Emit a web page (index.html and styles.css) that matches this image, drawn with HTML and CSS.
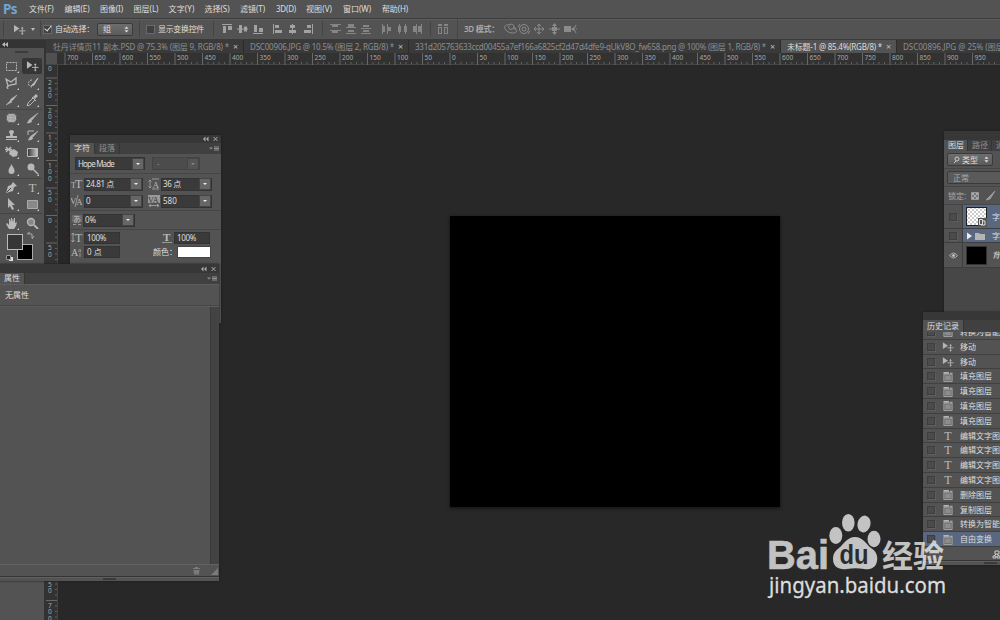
FILE: index.html
```html
<!DOCTYPE html>
<html lang="zh-CN">
<head>
    <meta charset="UTF-8">
    <title>Photoshop</title>
    <link rel="stylesheet" href="styles.css">
</head>
<body>
    <svg class="defs">
        <symbol id="move" viewBox="0 0 14 12"><path d="M1 1v8l6-4z" fill="currentColor"/><path d="M10 4v7M6.500 7.500h7" stroke="currentColor" fill="none"/><path d="M8.500 5l1.500-2 1.500 2zM8.500 10l1.500 2 1.500-2z" fill="currentColor"/></symbol>
        <symbol id="layer" viewBox="0 0 12 12"><path d="M1.500 3.500h9v8h-9z" stroke="#a5a5a5" fill="#6c6c6c"/><path d="M1 1h6v2H1zM8 2h3v1H8z" fill="#b5b5b5"/><path d="M3 5h6v5H3z" fill="#8d8d8d"/></symbol>
        <symbol id="updown" viewBox="0 0 6 8"><path d="M0.500 3L3 .500 5.500 3zM.500 5L3 7.500 5.500 5z" fill="#ddd"/></symbol>
        <symbol id="menu" viewBox="0 0 10 6"><path d="M0 1.500h4l-2 2zM5 .500h5v1H5zM5 2h5v1H5zM5 3.500h5v1H5z" fill="#909090"/></symbol>
    </svg>

    <nav class="menubar">
        <span class="logo">Ps</span>
        <span><b data-w="24.5">文件(F)</b></span>
        <span><b data-w="25">编辑(E)</b></span>
        <span><b data-w="23">图像(I)</b></span>
        <span><b data-w="25">图层(L)</b></span>
        <span><b data-w="26">文字(Y)</b></span>
        <span><b data-w="25">选择(S)</b></span>
        <span><b data-w="25">滤镜(T)</b></span>
        <span><b data-w="20">3D(D)</b></span>
        <span><b data-w="26">视图(V)</b></span>
        <span><b data-w="28">窗口(W)</b></span>
        <span><b data-w="26">帮助(H)</b></span>
    </nav>

    <div class="options">
        <div class="opt-tool"><svg width="13" height="11"><use href="#move"/></svg><i class="caret"></i></div>
        <div class="opt-auto"><i class="check on"></i><b data-w="39">自动选择：</b><div class="select">组<svg width="5" height="7"><use href="#updown"/></svg></div></div>
        <div class="opt-show"><i class="check"></i><b data-w="46">显示变换控件</b></div>
        <svg class="opt-align" width="237" height="20" fill="#a2a2a2" stroke="none">
            <path d="M9 5h10v1H9zM10 7h3v7h-3zM15 7h4v4h-4z"/>
            <path d="M24 9.500h11v1H24zM26 6h3v8h-3zM31 7.500h3v5h-3z"/>
            <path d="M40 14h10v1H40zM41 6h3v7h-3zM46 9h4v4h-4z"/>
            <path d="M60 5h1v10h-1zM62 6h4v3h-4zM62 11h7v3h-7z"/>
            <path d="M79 5h1v10h-1zM77 6h5v3h-5zM76 11h7v3h-7z"/>
            <path d="M99 5h1v10h-1zM94 6h4v3h-4zM91 11h7v3h-7z"/>
            <path d="M109 2h1v15h-1z" fill="#444"/>
            <g fill="#858585">
                <path d="M117 5h11v1h-11zM119 6h6v2h-6zM117 11h11v1h-11zM119 12h6v2h-6z"/>
                <path d="M133 8h10v1h-10zM135 5h6v3h-6zM133 14h10v1h-10zM135 11h6v2h-6z"/>
                <path d="M148 9h10v1h-10zM150 6h6v2h-6zM148 14h10v1h-10zM150 11h6v2h-6z"/>
                <path d="M169 5h1v10h-1zM170 7h2v6h-2zM174 5h1v10h-1zM175 8h3v4h-3z"/>
                <path d="M186 5h1v10h-1zM185 7h3v6h-3zM192 5h1v10h-1zM191 7h3v6h-3z"/>
                <path d="M200 7h3v6h-3zM203 5h1v10h-1zM205 7h3v6h-3zM208 5h1v10h-1z"/>
            </g>
            <path d="M217 2h1v15h-1z" fill="#444"/>
            <path d="M225 5h4v2h-4zM231 5h4v2h-4zM225 8h4v7h-4zM231 8h4v7h-4z" fill="#858585"/>
            <path d="M226 9h2v5h-2zM232 9h2v5h-2z" fill="#555"/>
        </svg>
        <div class="opt-3d"><b data-w="35">3D 模式：</b>
            <svg width="78" height="16" fill="none" stroke="#8b8b8b">
                <path d="M3 9C0 7 2 3 6 4c3-2 6 0 5 3M3 9c2 3 8 4 10 2s-1-4-4-3-4-1-3-3M10 6l3 2"/>
                <circle cx="21" cy="8" r="4.500"/><circle cx="21" cy="8" r="2"/><path d="M17 3l-2 3M25 13l2-3"/>
                <path d="M31 8h10M36 3v10M33 6l-2 2 2 2M39 6l2 2-2 2M34 5l2-2 2 2M34 11l2 2 2-2"/>
                <path d="M46 8h11M51.500 3v10"/><path d="M49 5l2.500-3L54 5zM49 11l2.500 3 2.500-3zM49 6h5v4h-5z" fill="#8b8b8b" stroke="none"/>
                <path d="M61 5h7v6h-7zM68 8l3-2v4z" fill="#8b8b8b" stroke="none"/><path d="M73 4l-2 4 2 4M73 8h1"/>
            </svg>
        </div>
    </div>

    <main class="workspace">
        <aside class="tools">
            <div class="tools-head"><svg width="6" height="5"><path d="M3 0v5L0 2.500zM6 0v5L3 2.500z" fill="#bbb"/></svg></div>
            <div class="grip"></div>
            <div class="tool-grid" id="tools"></div>
            <svg class="swatches" width="44" height="34">
                <path d="M28 4h4v4M27 4l3-2M32 9l2-3" stroke="#aaa" fill="none"/>
                <rect x="17.500" y="14.500" width="15" height="15" fill="#000" stroke="#aaa"/>
                <rect x="7.500" y="4.500" width="15" height="15" fill="#363636" stroke="#bbb"/>
                <path d="M9 27h4v4H9z" fill="#ddd"/><path d="M6.500 25.500h4v4h-4z" fill="#222" stroke="#999"/>
            </svg>
        </aside>
        <section class="documents">
            <div class="tabs">
                <div class="tab"><b data-w="176">牡丹详情页11 副本.PSD @ 75.3% (图层 9, RGB/8) *</b><i>×</i></div>
                <div class="tab"><b data-w="144">DSC00906.JPG @ 10.5% (图层 2, RGB/8) *</b><i>×</i></div>
                <div class="tab"><b data-w="351">331d205763633ccd00455a7ef166a6825cf2d47d4dfe9-qUkV8O_fw658.png @ 100% (图层 1, RGB/8) *</b><i>×</i></div>
                <div class="tab active"><b data-w="95">未标题-1 @ 85.4%(RGB/8) *</b><i>×</i></div>
                <div class="tab"><b data-w="144">DSC00896.JPG @ 25% (图层 2, RGB/8) *</b><i>×</i></div>
            </div>
            <div class="ruler-row"><div class="corner"></div><svg id="hruler" width="943" height="12"></svg></div>
            <div class="view-row">
                <svg id="vruler" width="12" height="555"></svg>
                <div class="view"><div class="artboard"></div></div>
            </div>
        </section>
    </main>

    <section class="panel character">
        <div class="bar"><svg width="15" height="6"><path d="M2.500 .500v5L0 3zM5.500 .500v5L3 3z" fill="#aaa"/><path d="M10.500 1l4 4M14.500 1l-4 4" stroke="#aaa"/></svg></div>
        <div class="ptabs"><span class="on">字符</span><span>段落</span><svg width="10" height="6"><use href="#menu"/></svg></div>
        <div class="char-body">
            <div class="row fonts"><div class="combo c57"><b data-w="36">Hope Made</b><i></i></div><div class="combo c35 off">-<i></i></div></div>
            <div class="row two">
                <svg width="12" height="12"><text x="0" y="10" font-size="8">T</text><text x="4" y="10" font-size="12">T</text></svg>
                <div class="combo c46"><b data-w="28">24.81 点</b><i></i></div>
                <svg width="12" height="12"><path d="M2 2v8M.500 3.500L2 2l1.500 1.500M.500 8.500L2 10l1.500-1.500M4 1h7M4 11h7"/><text x="4.500" y="9.500" font-size="9">A</text></svg>
                <div class="combo c38"><b data-w="18">36 点</b><i></i></div>
            </div>
            <div class="row two">
                <svg width="12" height="12"><text x="-1" y="9" font-size="9">V</text><text x="5" y="10" font-size="9">A</text><path d="M7 0L4 12"/></svg>
                <div class="combo c46">0<i></i></div>
                <svg width="12" height="12"><path d="M0 0h12v8H0z" class="solid"/><text x="0" y="7.500" font-size="8" class="inv">VA</text><path d="M1 10.500h10M3 9l-2 1.500L3 12M9 9l2 1.500L9 12"/></svg>
                <div class="combo c38">580<i></i></div>
            </div>
            <div class="row scale">
                <svg width="10" height="12"><path d="M0 1h10v7H0z" class="solid dim"/><text x="1" y="8" font-size="8">あ</text><path d="M1 10.500h3M6 10.500h3"/></svg>
                <div class="combo c39">0%<i></i></div>
            </div>
            <div class="row pct">
                <svg width="13" height="12"><path d="M2 1v9M.500 3L2 1l1.500 2M.500 8L2 10l1.500-2"/><text x="4" y="10" font-size="12">T</text></svg>
                <div class="field"><b data-w="19">100%</b></div>
                <svg width="12" height="12"><text x="2" y="8.500" font-size="11" font-weight="bold">T</text><path d="M1 10.500h10"/></svg>
                <div class="field"><b data-w="19">100%</b></div>
            </div>
            <div class="row base">
                <svg width="13" height="12"><text x="0" y="10" font-size="10">A</text><text x="7" y="6" font-size="7">a</text><path d="M9 7v4"/></svg>
                <div class="field">0 点</div>
                <label>颜色：</label>
                <div class="color"></div>
            </div>
        </div>
    </section>

    <section class="panel properties">
        <div class="bar"><svg width="15" height="6"><path d="M2.500 .500v5L0 3zM5.500 .500v5L3 3z" fill="#aaa"/><path d="M10.500 1l4 4M14.500 1l-4 4" stroke="#aaa"/></svg></div>
        <div class="ptabs"><span class="on">属性</span><svg width="10" height="6"><use href="#menu"/></svg></div>
        <div class="prop-title">无属性</div>
        <div class="prop-body"><div class="scroll"></div></div>
        <div class="prop-foot">
            <svg width="26" height="11" fill="#7b7b7b"><path d="M1 3h7v1H1zM3 2h3v1H3zM1.500 5h6L7 9.500H2zM26 3v7h-7z"/></svg>
        </div>
        <div class="resize"></div>
    </section>

    <section class="panel layers">
        <div class="bar"></div>
        <div class="ptabs"><span class="on">图层</span><span>路径</span><span>通道</span></div>
        <div class="lrow filter"><div class="select"><svg width="7" height="8" fill="none" stroke="#ccc"><circle cx="4" cy="3" r="2"/><path d="M3 5L1 7"/></svg>类型<svg class="ud" width="5" height="7"><use href="#updown"/></svg></div></div>
        <div class="lrow blend"><div class="select">正常</div></div>
        <div class="lrow lock">锁定:<svg width="26" height="11"><path d="M1.500 2.500h7v7h-7z" fill="#777" stroke="#999"/><path d="M2 3h2v2H2zM6 3h2v2H6zM4 5h2v2H4zM2 7h2v2H2zM6 7h2v2H6z" fill="#aaa"/><path d="M25 1l-6 6-3 3 4-1z" fill="#999" stroke="#999"/></svg></div>
        <div class="layer sel l1"><div class="eye"><i class="box"></i></div><div class="name"><svg width="21" height="20"><defs><pattern id="chk" width="4" height="4" patternUnits="userSpaceOnUse"><path d="M0 0h4v4H0z" fill="#fff"/><path d="M0 0h2v2H0zM2 2h2v2H2z" fill="#ccc"/></pattern></defs><rect x=".5" y=".5" width="20" height="18" fill="url(#chk)" stroke="#222"/><path d="M12 11h9v9h-9z" fill="#555"/><path d="M13.500 12.500h3v5h-3zM17 14h2v4h-4" fill="none" stroke="#ddd"/></svg>字</div></div>
        <div class="layer sel l2"><div class="eye"><i class="box"></i></div><div class="name"><svg width="21" height="12"><path d="M1 2.500l5 3.500-5 3.500z" fill="#eee"/><path d="M9 3h4l1 1h5v6H9z" fill="#b4b4b4"/></svg>字</div></div>
        <div class="layer l3"><div class="eye"><svg width="9" height="7"><path d="M.500 3.500q4-5 8 0-4 5-8 0z" fill="#666" stroke="#aaa"/><circle cx="4.500" cy="3.500" r="1.300" fill="#ccc"/></svg></div><div class="name"><span class="thumb"></span><em>背景</em></div></div>
    </section>

    <section class="panel history">
        <div class="bar"></div>
        <div class="ptabs"><span class="on">历史记录</span></div>
        <div class="hlist" id="history"></div>
        <div class="hfoot"><svg width="8" height="9" fill="none" stroke="#ccc"><path d="M1 6h3v2H1zM5 6h3v2H5zM3 1h4v3H3zM4 4L2 6M5 4l2 2"/></svg></div>
        <div class="resize"></div>
    </section>

    <svg class="watermark" width="190" height="100" viewBox="762 505 190 100">
        <g fill="#fff" fill-opacity=".72">
            <text x="767" y="568.500" textLength="62" lengthAdjust="spacingAndGlyphs" class="wm-bai">Bai</text>
            <ellipse cx="835.800" cy="535.500" rx="6.500" ry="8.500"/>
            <ellipse cx="848.300" cy="522.800" rx="6.300" ry="8.800"/>
            <ellipse cx="864" cy="524" rx="6.500" ry="8.500" transform="rotate(12 864 524)"/>
            <ellipse cx="874" cy="539" rx="6.500" ry="8.300"/>
            <path d="M855 537c8 0 11 7 16 11 5 3 7 8 6 13-1 7-7 9-13 8-6-1-11-1-17 0-8 1-14-2-14-10 0-5 2-8 6-11 5-4 8-11 16-11z"/>
            <text x="882" y="567" textLength="62" class="wm-jy">经验</text>
            <text x="769" y="593" textLength="177" lengthAdjust="spacingAndGlyphs" class="wm-url">jingyan.baidu.com</text>
        </g>
        <text x="839.500" y="564" textLength="29" lengthAdjust="spacingAndGlyphs" class="wm-du">du</text>
    </svg>

    <script src="app.js"></script>
</body>
</html>
```

FILE: styles.css
```css
* {
    box-sizing: border-box;
}
body {
    margin: 0;
    width: 1000px;
    height: 620px;
    overflow: hidden;
    position: relative;
    display: flex;
    flex-direction: column;
    background: #282828;
    color: #dedede;
    font: 8px/10px "Noto Sans", "Noto Sans CJK SC", sans-serif;
    white-space: nowrap;
}
b, i {
    font-weight: normal;
    font-style: normal;
}
svg {
    display: block;
    flex: none;
}
.defs {
    position: absolute;
    width: 0;
    height: 0;
}

/* menu and options bars */
.menubar {
    height: 18px;
    flex: none;
    display: grid;
    grid-template-columns: 26px 35.5px 35.5px 33.5px 35px 36px 35.5px 36px 30px 37px 39px 60px;
    align-items: center;
    padding-left: 3px;
    background: #535353;
}
.logo {
    color: #6fa5da;
    font: bold 13.5px/16px "Noto Sans", sans-serif;
    letter-spacing: -0.6px;
}
.options {
    height: 22px;
    flex: none;
    display: flex;
    align-items: center;
    background: #535353;
    border-top: 1px solid #3d3d3d;
    border-bottom: 1px solid #3a3a3a;
    box-shadow: inset 0 1px #5e5e5e;
}
.opt-tool {
    width: 38px;
    margin-left: 3px;
    padding-left: 9px;
    display: flex;
    align-items: center;
    gap: 5px;
    height: 16px;
    border-left: 1px solid #444;
    border-right: 1px solid #444;
    color: #b5b5b5;
}
.caret {
    border: 2px solid transparent;
    border-top: 3px solid #bbb;
    border-bottom: 0;
}
.opt-auto {
    width: 99px;
    padding-left: 2px;
    display: flex;
    align-items: center;
    height: 16px;
    border-right: 1px solid #444;
}
.check {
    width: 9px;
    height: 9px;
    flex: none;
    margin-right: 3px;
    background: #404040;
    border: 1px solid #6a6a6a;
    position: relative;
}
.check.on::after {
    content: "";
    position: absolute;
    left: 2px;
    top: -2px;
    width: 3px;
    height: 6px;
    border: solid #ddd;
    border-width: 0 1px 1px 0;
    transform: rotate(40deg);
}
.select {
    display: flex;
    align-items: center;
    justify-content: space-between;
    height: 13px;
    padding: 0 3px 0 5px;
    background: linear-gradient(#6d6d6d, #5c5c5c);
    border: 1px solid #3a3a3a;
    border-radius: 2px;
}
.opt-auto .select {
    width: 36px;
    margin-left: 3px;
}
.opt-show {
    width: 74px;
    padding-left: 6px;
    display: flex;
    align-items: center;
    height: 16px;
    border-right: 1px solid #444;
}
.opt-align {
    width: 237px;
    margin-left: -1px;
}
.opt-3d {
    display: flex;
    align-items: center;
    margin-left: 7px;
    padding-left: 6px;
    border-left: 1px solid #454545;
    height: 20px;
    color: #aaa;
    gap: 4px;
}
.opt-3d b {
    font-weight: 600;
}

/* toolbox */
.workspace {
    flex: 1;
    display: flex;
    min-height: 0;
}
.tools {
    width: 46px;
    flex: none;
    background: #535353;
    border-right: 2px solid #333;
}
.tools-head {
    height: 8px;
    padding: 2px;
    background: #343434;
}
.grip {
    width: 13px;
    height: 2px;
    margin: 3px 15px 4px;
    background: #3c3c3c;
}
.tool-grid {
    display: grid;
    grid-template-columns: 22px 20px;
    grid-template-rows: 17.5px 17px 17px 18px repeat(3, 17px) 18px 17px 19px;
}
.tool {
    display: flex;
    align-items: center;
    justify-content: center;
    position: relative;
    color: #b8b8b8;
}
.tool text {
    fill: currentColor;
    font: 13px "Liberation Serif", serif;
}
.tool.line {
    border-top: 1px solid #444;
}
.tool.active {
    background: #363636;
    border-radius: 2px;
    margin: 1px 0;
}
.tool.more::after {
    content: "";
    position: absolute;
    right: 3px;
    bottom: 2px;
    border-left: 2px solid transparent;
    border-bottom: 2px solid #ccc;
}
.swatches {
    margin-top: -1.5px;
}

/* documents */
.documents {
    flex: 1;
    min-width: 0;
    display: flex;
    flex-direction: column;
}
.tabs {
    height: 13px;
    flex: none;
    display: flex;
    overflow: hidden;
    padding-left: 1px;
    background: #3a3a3a;
}
.tab {
    flex: none;
    display: flex;
    align-items: center;
    gap: 4px;
    padding: 1px 4px 0 6px;
    color: #8e8e8e;
    border-right: 1px solid #2c2c2c;
}
.tab i {
    width: 6px;
    color: #bbb;
    font-size: 9px;
}
.tab.active {
    background: #535353;
    color: #dedede;
}
.ruler-row,
.view-row {
    display: flex;
}
.ruler-row {
    height: 12px;
    background: #323232;
    border-bottom: 1px solid #454545;
}
.corner {
    width: 11px;
    height: 11px;
    background: #505050;
}
#vruler {
    background: #323232;
    border-right: 1px solid #454545;
}
.ruler-text {
    fill: #a8a8a8;
    font-size: 6.5px;
}
.view {
    flex: 1;
    height: 555px;
    padding: 150.5px 0 0 392px;
}
.artboard {
    width: 330px;
    height: 291px;
    background: #000;
    box-shadow: 0 1px 3px #111;
}

/* floating panels */
.panel {
    position: absolute;
    overflow: hidden;
    display: flex;
    flex-direction: column;
    background: #535353;
    box-shadow: 0 0 2px #1a1a1a;
}
.bar {
    height: 8px;
    flex: none;
    display: flex;
    justify-content: flex-end;
    align-items: center;
    padding-right: 3px;
    background: #373737;
}
.ptabs {
    height: 11px;
    flex: none;
    display: flex;
    background: #404040;
}
.ptabs span {
    padding: 0 4px;
    color: #8f8f8f;
    border-right: 1px solid #353535;
}
.ptabs .on {
    background: #535353;
    color: #dedede;
}
.ptabs svg {
    margin: 3px 2px 0 auto;
}
.character {
    left: 70px;
    top: 135px;
    width: 151px;
    height: 188px;
}
.row {
    display: flex;
    align-items: center;
    height: 17px;
}
.row text {
    fill: #bbb;
    font-family: "Liberation Serif", "Noto Sans CJK SC", serif;
}
.row .inv {
    fill: #333;
}
.row path {
    fill: none;
    stroke: #aaa;
    stroke-width: 0.8;
}
.row .solid {
    fill: #999;
    stroke: none;
}
.row .dim {
    fill: #6a6a6a;
}
.combo {
    height: 13px;
    display: flex;
    align-items: center;
    justify-content: space-between;
    padding-left: 1px;
    background: #3a3a3a;
    border: 1px solid #333;
}
.combo i {
    width: 12px;
    height: 12px;
    background: #666;
    border: 1px solid #444;
    display: flex;
    align-items: center;
    justify-content: center;
}
.combo i::after {
    content: "";
    border: 2px solid transparent;
    border-top: 2px solid #eee;
    border-bottom: 0;
}
.combo.off {
    padding-left: 4px;
    background: #4c4c4c;
    border-color: #444;
    color: #888;
}
.combo.off i {
    background: #555;
}
.combo.off i::after {
    border-top-color: #888;
}
.c57 { width: 70px; padding-left: 2px; }
.c35 { width: 48px; }
.c46 { width: 59px; }
.c38 { width: 51px; }
.c39 { width: 52px; }
.fonts {
    height: 20px;
    padding: 0 0 0 5px;
    gap: 7px;
    border-bottom: 1px solid #464646;
}
.two {
    padding-left: 1px;
}
.two .c46 {
    margin: 0 5px 0 1px;
}
.two .c38 {
    margin-left: 1px;
}
.fonts + .two {
    height: 20px;
}
.two + .two {
    height: 14px;
}
.scale {
    height: 20px;
    margin-top: 2px;
    padding-left: 2px;
    gap: 1px;
    border: solid #464646;
    border-width: 1px 0;
}
.field {
    height: 12px;
    width: 36px;
    padding-left: 2px;
    background: #3a3a3a;
    border: 1px solid #333;
}
.pct {
    height: 16px;
    padding-left: 1px;
}
.pct .field:nth-of-type(1) {
    margin: 0 41px 0 0;
}
.pct .field:last-child {
    margin-left: 1px;
}
.base {
    height: 12px;
    padding-left: 1px;
}
.base label {
    width: 24px;
    margin-left: 33px;
}
.color {
    width: 34px;
    height: 12px;
    background: #fff;
    border: 1px solid #444;
}
.properties {
    left: 0;
    top: 264px;
    width: 219px;
    height: 317px;
}
.properties .bar {
    height: 9px;
}
.prop-title {
    height: 22px;
    padding: 5px 5px 0;
    border-top: 1px solid #5e5e5e;
    border-bottom: 1px solid #464646;
}
.prop-body {
    flex: 1;
    display: flex;
    justify-content: flex-end;
    border-top: 1px solid #5c5c5c;
}
.scroll {
    width: 9px;
    background: #434343;
    border-left: 1px solid #393939;
}
.prop-foot {
    height: 12px;
    display: flex;
    justify-content: flex-end;
    padding-right: 1px;
    border-top: 1px solid #626262;
}
.resize {
    height: 5px;
    flex: none;
    border-top: 1px solid #353535;
    box-shadow: inset 0 1px #606060;
}
.resize::after {
    content: "";
    display: block;
    width: 13px;
    height: 2px;
    margin: 1px auto 0;
    background: #3a3a3a;
}

.layers {
    left: 944px;
    top: 131px;
    width: 56px;
    height: 181px;
    background: #474747;
}
.layers .bar {
    height: 9px;
}
.layers .ptabs span {
    padding: 0 3px 0 4px;
}
.lrow {
    flex: none;
    display: flex;
    align-items: center;
    height: 18px;
    padding-left: 3px;
    background: #535353;
    border-bottom: 1px solid #464646;
}
.filter .select {
    width: 46px;
    gap: 2px;
}
.filter .ud {
    margin-left: auto;
}
.blend .select {
    width: 60px;
    flex: none;
    background: #5a5a5a;
    color: #aaa;
}
.lock {
    padding-left: 4px;
    gap: 4px;
    color: #aaa;
}
.layer {
    flex: none;
    display: flex;
    background: #535353;
    border-bottom: 1px solid #3e3e3e;
}
.l1 { height: 24px; }
.l2 { height: 14px; }
.l3 { height: 25px; }
.eye {
    width: 19px;
    flex: none;
    display: flex;
    align-items: center;
    justify-content: center;
    border-right: 1px solid #3e3e3e;
}
.box {
    width: 8px;
    height: 8px;
    flex: none;
    background: #4b4b4b;
    border: 1px solid #3e3e3e;
    box-shadow: 1px 1px #5e5e5e;
}
.name {
    flex: 1;
    display: flex;
    align-items: center;
    padding-left: 3px;
    gap: 5px;
}
.sel .name {
    background: #596880;
}
.thumb {
    width: 21px;
    height: 19px;
    flex: none;
    background: #000;
    border: 1px solid #333;
}

.history {
    left: 923px;
    top: 312px;
    width: 77px;
    height: 253px;
}
.history .ptabs {
    height: 12px;
}
.history .ptabs span {
    padding-top: 1px;
}
.hlist {
    height: 215px;
    flex: none;
    display: flex;
    flex-direction: column;
    justify-content: flex-end;
    overflow: hidden;
}
.state {
    height: 14.8px;
    flex: none;
    display: flex;
    align-items: center;
    padding-left: 4px;
    border-bottom: 1px solid #404040;
}
.state svg {
    margin: 0 6px 0 7px;
    color: #b5b5b5;
}
.state .t {
    width: 12px;
    flex: none;
    margin: 0 6px 0 7px;
    text-align: center;
    color: #bbb;
    font: 12px/12px "Liberation Serif", serif;
}
.state.current {
    background: #596880;
}
.hfoot {
    height: 13px;
    flex: none;
    display: flex;
    justify-content: flex-end;
    padding-top: 3px;
}
.history .resize::after {
    margin-left: 61px;
}

/* watermark */
.watermark {
    position: absolute;
    left: 762px;
    top: 505px;
}
.wm-bai {
    font: bold 40px "Liberation Sans", sans-serif;
    stroke: #c3c3c3;
    stroke-width: 0.6px;
}
.wm-jy {
    font: bold 31px "Noto Sans CJK SC", sans-serif;
}
.wm-url {
    font: 22px "Noto Sans", sans-serif;
    fill-opacity: 0.85;
    stroke: #ddd;
    stroke-width: 0.3px;
}
.wm-du {
    font: bold 27px "Liberation Sans", sans-serif;
    fill: #2c2c2c;
}
```

FILE: app.js
```js
// toolbox icons, two per row
const tools = [
    '<path d="M1.500 2.500h10v8h-10z" fill="none" stroke="currentColor" stroke-dasharray="2 1"/>',
    '<use href="#move"/>',
    '<path d="M3 9L1 2l5 3 5-4v6l-6 1-3 2 1 2" fill="none" stroke="currentColor" stroke-width="1.300"/>',
    '<path d="M12 1L7 7 5 9l3-1z" fill="currentColor" stroke="currentColor"/><path d="M6 3a3 3 0 1 0 0 7" fill="none" stroke="currentColor" stroke-dasharray="2 1"/>',
    '<path d="M12 1L6 5 5 7l3-1zM6 6l-5 5 6-3z" fill="currentColor" stroke="currentColor" stroke-width=".5"/>',
    '<path d="M10 0l2 2-3 3-2-2z" fill="currentColor"/><path d="M6 3l4 4M7 4l-5 5-1 3 3-1 5-5" fill="none" stroke="currentColor"/>',
    '<rect x="2" y="2" width="9" height="8" rx="3" fill="currentColor"/><path d="M1 4h11M1 7h11M4 1v10M7 1v10M9 1v10" stroke="#999" stroke-width=".7"/>',
    '<path d="M12 1L6 8 4 7zM4 7l2 2c-1 2-3 2-5 2 2-1 1-3 3-4z" fill="currentColor" stroke="currentColor" stroke-width=".5"/>',
    '<path d="M5 7c1-2-1-3-1-4s1-2 2.500-2S9 2 9 3 7 5 8 7h4v2H1V7zM1 10h11v1H1z" fill="currentColor"/>',
    '<path d="M12 2L7 8 5 7zM5 7l2 2c-1 2-3 2-5 2 2-1 1-3 3-4z" fill="currentColor" stroke="currentColor" stroke-width=".5"/><path d="M2 6V2h6" fill="none" stroke="currentColor"/>',
    '<path d="M5 5l4-2 4 3-1 4-4 1-4-3z" fill="currentColor"/><path d="M1 1l5 5M6 1L1 6M0 3.500h7" stroke="currentColor" stroke-width="1.300"/>',
    '<path d="M1.500 2.500h10v8h-10z" fill="url(#grad)" stroke="#bbb"/>',
    '<path d="M6.500 1c1 3 3 4 3 7a3 3 0 0 1-6 0c0-3 2-4 3-7z" fill="currentColor"/>',
    '<circle cx="5" cy="4" r="3.500" fill="currentColor"/><path d="M7 6l5 5" stroke="currentColor" stroke-width="1.500"/>',
    '<path d="M8 1l4 4-3 1-1 4-7 2L3 5l3-1z" fill="currentColor"/><path d="M2 11l4-4" stroke="#444"/>',
    '<text x="2.500" y="10.500">T</text>',
    '<path d="M3 0v10l2-2 2 4 2-1-2-4h3z" fill="currentColor"/>',
    '<path d="M1.500 2.500h10v8h-10z" fill="#888" stroke="#aaa"/>',
    '<path d="M4 12L1 7l1-1 2 2V2h1l1 3V1h1l1 4 1-4h1v5l2-1-1 4-2 3z" fill="currentColor"/>',
    '<circle cx="5" cy="5" r="3.500" fill="#888" stroke="currentColor" stroke-width="1.300"/><path d="M8 8l4 4" stroke="currentColor" stroke-width="1.800"/>'
];
document.getElementById('tools').innerHTML =
    '<svg class="defs"><linearGradient id="grad"><stop stop-color="#333"/><stop offset="1" stop-color="#ccc"/></linearGradient></svg>' +
    tools.map((icon, i) => {
        let cls = 'tool';
        if (i === 1) cls += ' active';
        if (i !== 1 && i < 19) cls += ' more';
        if ([6, 7, 14, 15, 18, 19].includes(i)) cls += ' line';
        return `<div class="${cls}"><svg width="13" height="12" viewBox="0 0 13 12">${icon}</svg></div>`;
    }).join('');

// rulers: a label every 50px of the document, 27.5px on screen
const step = 27.5;
let h = '';
for (let v = -700; v < 1000; v += 50) {
    const x = 393 + v / 50 * step;
    h += `<path d="M${x} 0v12" stroke="#686868"/><text class="ruler-text" x="${x + 2}" y="7">${Math.abs(v)}</text>`;
    for (let k = 1; k < 5; k++) h += `<path d="M${x + k * step / 5} 9v2" stroke="#606060"/>`;
}
document.getElementById('hruler').innerHTML = h;

let vr = '';
for (let v = -250; v <= 700; v += 50) {
    const y = 150.5 + v / 50 * step;
    vr += `<path d="M0 ${y}h12" stroke="#686868"/>`;
    String(Math.abs(v)).split('').forEach((d, i) => {
        vr += `<text class="ruler-text" x="2" y="${y + 7 + i * 6.6}">${d}</text>`;
    });
    for (let k = 1; k < 5; k++) vr += `<path d="M9 ${y + k * step / 5}h2" stroke="#606060"/>`;
}
vr += '<text class="ruler-text" x="2" y="6">0</text>';
document.getElementById('vruler').innerHTML = vr;

// history states
const states = [
    ['layer', '转换为智能对象'], ['move', '移动'], ['move', '移动'],
    ['layer', '填充图层'], ['layer', '填充图层'], ['layer', '填充图层'], ['layer', '填充图层'],
    ['T', '编辑文字图层'], ['T', '编辑文字图层'], ['T', '编辑文字图层'], ['T', '编辑文字图层'],
    ['layer', '删除图层'], ['layer', '复制图层'], ['layer', '转换为智能对象'], ['layer', '自由变换']
];
document.getElementById('history').innerHTML = states.map(([icon, name], i) => {
    const pic = icon === 'T' ? '<span class="t">T</span>' : `<svg width="12" height="11"><use href="#${icon}"/></svg>`;
    return `<div class="state${i === states.length - 1 ? ' current' : ''}"><i class="box"></i>${pic}${name}</div>`;
}).join('');

// spread labels to their set width
document.querySelectorAll('[data-w]').forEach(el => {
    const w = Number(el.dataset.w);
    el.style.display = 'inline-block';
    el.style.letterSpacing = (w - el.getBoundingClientRect().width) / el.textContent.length + 'px';
});
```
